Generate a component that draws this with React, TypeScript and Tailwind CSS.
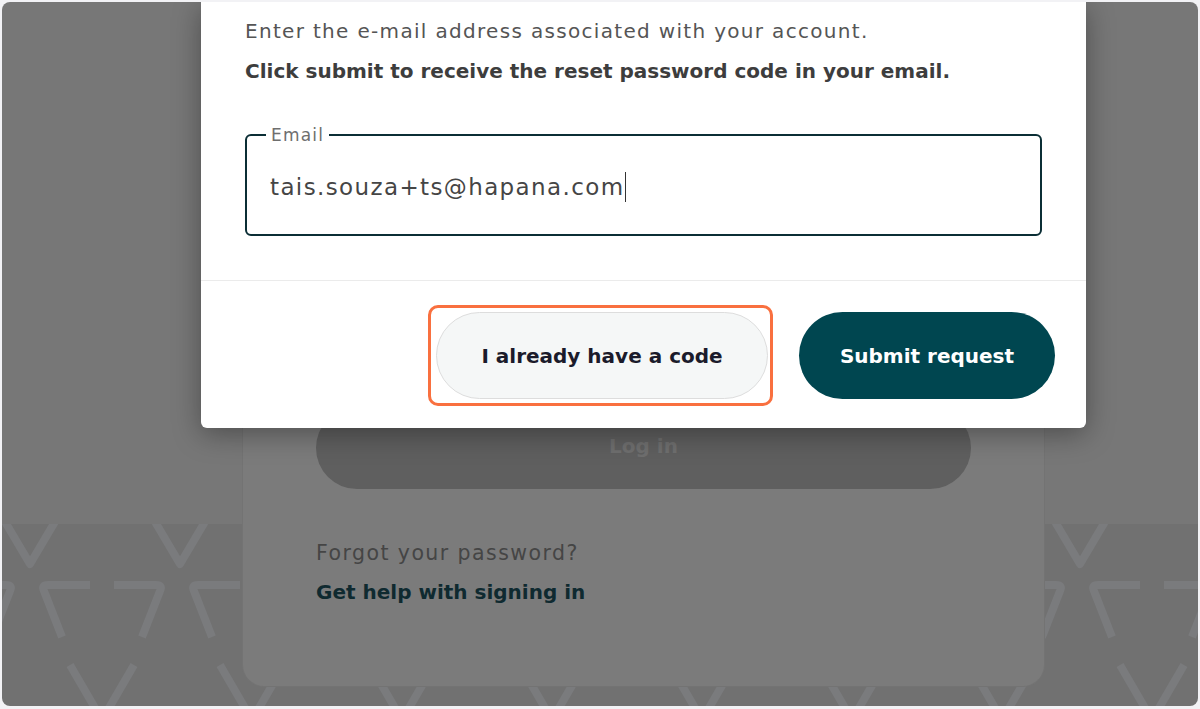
import React from "react";

const font = { fontFamily: "'DejaVu Sans', 'Liberation Sans', sans-serif" };

function Pattern() {
  const cols = Array.from({ length: 10 }, (_, i) => i - 1);
  return (
    <svg width="1196" height="184" viewBox="0 0 1196 184" className="block">
      <g
        fill="none"
        stroke="#7a7b7d"
        strokeWidth="8"
        strokeLinecap="butt"
        strokeLinejoin="round"
      >
        {cols.map((k) => {
          const c1 = 28 + 150 * k;
          const c2 = 100 + 150 * k;
          return (
            <g key={k}>
              <path d={`M ${c1 - 26} -4 L ${c1} 40 L ${c1 + 26} -4`} />
              <path d={`M ${c2 - 12} 61 L ${c2 - 54} 61 Q ${c2 - 61} 61 ${c2 - 58} 67 L ${c2 - 40} 113`} />
              <path d={`M ${c2 + 12} 61 L ${c2 + 54} 61 Q ${c2 + 61} 61 ${c2 + 58} 67 L ${c2 + 40} 113`} />
              <path d={`M ${c2 - 32} 141 L ${c2} 196 L ${c2 + 32} 141`} />
            </g>
          );
        })}
      </g>
    </svg>
  );
}

export default function App() {
  return (
    <div
      className="w-[1200px] h-[709px] bg-[#f2f2f5] pt-[2px] pl-[2px] pr-[2px] pb-[3px] overflow-hidden"
      style={font}
    >
      <div className="grid w-full h-full rounded-[8px] overflow-hidden">
        {/* background */}
        <div className="col-start-1 row-start-1 flex flex-col">
          <div className="h-[522px] bg-[#777777]" />
          <div className="flex-1 bg-[#717171] overflow-hidden">
            <Pattern />
          </div>
        </div>

        {/* login card */}
        <div className="col-start-1 row-start-1 flex flex-col pl-[240px] pb-[21px]">
          <div className="w-[803px] flex-1 flex flex-col justify-end bg-[#7b7b7b] border border-t-0 border-[#737373] rounded-b-[22px] px-[73px] pb-[82px]">
            <div className="h-[82px] rounded-full bg-[#5f5f5f] flex items-center justify-center pb-[4px] text-[20px] font-bold text-[#6f6f6f]">
              Log in
            </div>
            <div className="mt-[52px] text-[20.5px] leading-[24px] tracking-[0.07em] text-[#454545]">
              Forgot your password?
            </div>
            <div className="mt-[15px] text-[20px] leading-[24px] font-bold text-[#0f2a30]">
              Get help with signing in
            </div>
          </div>
        </div>

        {/* modal */}
        <div className="col-start-1 row-start-1 self-start pl-[199px]">
          <div className="w-[885px] bg-white rounded-b-[6px] shadow-[0_6px_28px_rgba(0,0,0,0.35)]">
            <div className="px-[44px] pt-[15px] pb-[44px] border-b border-[#ebebeb]">
              <p className="text-[20px] leading-[28px] tracking-[0.066em] text-[#555555] whitespace-nowrap">
                Enter the e-mail address associated with your account.
              </p>
              <p className="mt-[12px] text-[20px] leading-[28px] font-bold text-[#3d3d3d] whitespace-nowrap">
                Click submit to receive the reset password code in your email.
              </p>
              <fieldset className="mt-[40px] border-2 border-[#0b2e35] rounded-[6px] pl-[23px] pr-[20px] pt-[26px] pb-[31px]">
                <legend className="ml-[-4px] px-[5px] text-[17px] leading-[20px] tracking-[0.07em] text-[#6e6e6e]">
                  Email
                </legend>
                <div className="flex items-center text-[23px] leading-[32px] tracking-[0.06em] text-[#454545]">
                  <span>tais.souza+ts@hapana.com</span>
                  <span className="ml-[1px] w-[1px] h-[30px] bg-[#333333]" />
                </div>
              </fieldset>
            </div>
            <div className="flex justify-end gap-[31px] pt-[31px] pb-[29px] pr-[31px]">
              <div className="relative">
                <span className="absolute top-[-7px] bottom-[-7px] left-[-8px] right-[-5px] rounded-[10px] border-[3px] border-[#f9703f]" />
                <button className="relative w-[332px] h-[87px] rounded-full bg-[#f5f7f7] border border-[#dddddd] text-[20px] font-bold text-[#1b1b2b]">
                  I already have a code
                </button>
              </div>
              <button className="w-[256px] h-[87px] rounded-full bg-[#004650] text-[20px] font-bold text-white">
                Submit request
              </button>
            </div>
          </div>
        </div>
      </div>
    </div>
  );
}
